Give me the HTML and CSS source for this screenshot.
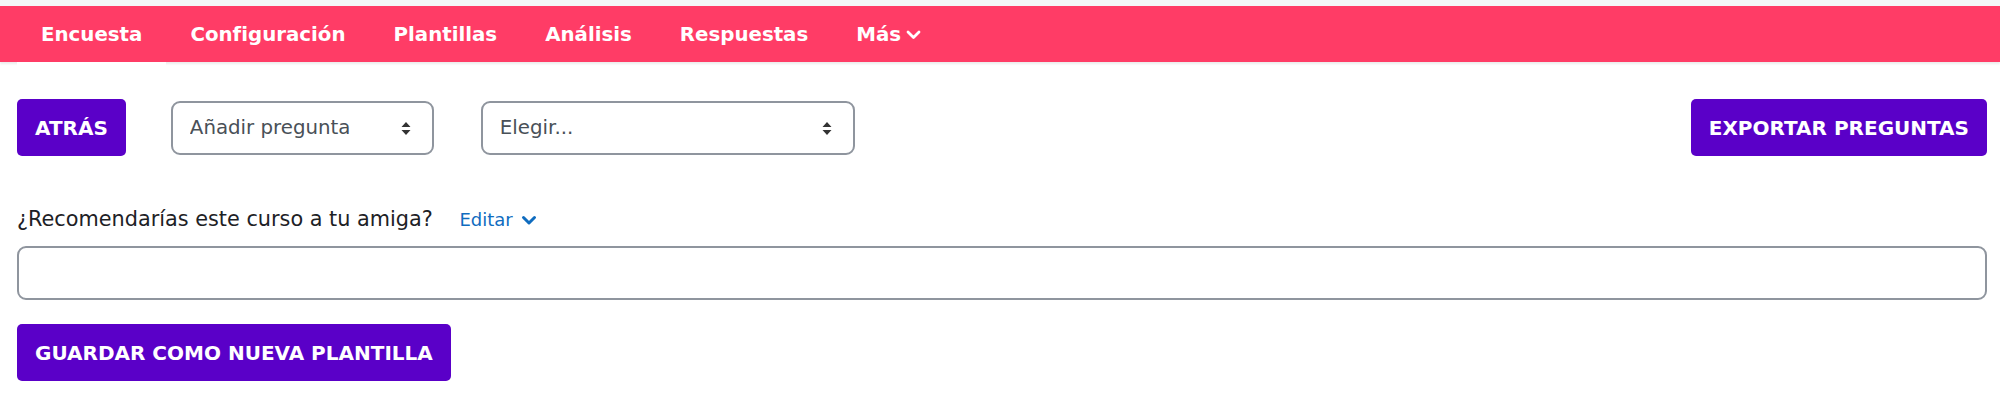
FILE: index.html
```html
<!DOCTYPE html>
<html lang="es">

<head>
    <meta charset="UTF-8">
    <meta name="viewport" content="width=device-width, initial-scale=1.0">
    <title>Encuesta</title>
    <link rel="stylesheet" href="styles.css">
</head>

<body>
    <div class="top">
        <nav class="tabs">
            <a href="#" class="active">Encuesta</a>
            <a href="#">Configuración</a>
            <a href="#">Plantillas</a>
            <a href="#">Análisis</a>
            <a href="#">Respuestas</a>
            <a href="#">Más
                <svg class="chev" width="15" height="10" viewBox="0 0 15 10">
                    <path d="M2 2 L7.5 7.5 L13 2" fill="none" stroke="#fff" stroke-width="2.8" stroke-linecap="round" stroke-linejoin="round" />
                </svg>
            </a>
        </nav>
    </div>

    <div class="content">
        <div class="toolbar">
            <button class="btn">Atrás</button>
            <div class="select-wrap sel-add">
                <select>
                    <option>Añadir pregunta</option>
                </select>
                <svg class="updown" width="10" height="15" viewBox="0 0 10 15">
                    <path d="M5 1 L9.5 6 L0.5 6 Z M5 14 L9.5 9 L0.5 9 Z" fill="#333" />
                </svg>
            </div>
            <div class="select-wrap sel-choose">
                <select>
                    <option>Elegir...</option>
                </select>
                <svg class="updown" width="10" height="15" viewBox="0 0 10 15">
                    <path d="M5 1 L9.5 6 L0.5 6 Z M5 14 L9.5 9 L0.5 9 Z" fill="#333" />
                </svg>
            </div>
            <button class="btn push-right">Exportar preguntas</button>
        </div>

        <div class="question">
            ¿Recomendarías este curso a tu amiga?
            <a href="#" class="edit">Editar
                <svg width="16" height="11" viewBox="0 0 16 11">
                    <path d="M2.5 2.5 L8 8 L13.5 2.5" fill="none" stroke="#0f6cbf" stroke-width="3" stroke-linecap="round" stroke-linejoin="round" />
                </svg>
            </a>
        </div>
        <input type="text" class="answer">

        <button class="btn save">Guardar como nueva plantilla</button>
    </div>
</body>

</html>
```

FILE: styles.css
```css
body {
    font-family: "DejaVu Sans", "Noto Sans", sans-serif;
    background-color: #fff;
    color: #1d2125;
    margin: 0;
    padding: 0;
}

.top {
    background-color: #f4f6f8;
    padding-top: 6px;
}

.tabs {
    background-color: #ff3c66;
    display: flex;
    height: 56px;
    padding-left: 17px;
    box-shadow: 0 2px 2px rgba(0, 0, 0, 0.08);
}

.tabs a {
    position: relative;
    display: flex;
    align-items: center;
    gap: 5px;
    padding: 0 24px;
    color: #fff;
    font-size: 19.8px;
    font-weight: 700;
    text-decoration: none;
}

.tabs a.active::after {
    content: "";
    position: absolute;
    left: 0;
    right: 0;
    bottom: -4px;
    height: 4px;
    background-color: #fff;
}

.chev {
    margin-top: 2px;
}

.content {
    padding: 0 13px 0 17px;
}

.toolbar {
    display: flex;
    align-items: center;
    margin-top: 37px;
}

.btn {
    font-family: inherit;
    background-color: #5a00c8;
    color: #fff;
    border: none;
    border-radius: 5px;
    height: 57px;
    padding: 0 18px;
    font-size: 20px;
    font-weight: 700;
    text-transform: uppercase;
    cursor: pointer;
}

.push-right {
    margin-left: auto;
}

.select-wrap {
    position: relative;
}

.sel-add {
    width: 263px;
    margin-left: 45px;
}

.sel-choose {
    width: 374px;
    margin-left: 47px;
}

.select-wrap select {
    appearance: none;
    width: 100%;
    height: 54px;
    padding: 0 40px 0 17px;
    font-family: inherit;
    font-size: 19.8px;
    color: #495057;
    background-color: #fff;
    border: 2px solid #8f959e;
    border-radius: 9px;
    box-sizing: border-box;
}

.updown {
    position: absolute;
    right: 23px;
    top: 20px;
    pointer-events: none;
}

.question {
    margin-top: 50px;
    font-size: 20.8px;
    line-height: 27px;
}

.edit {
    color: #0f6cbf;
    font-size: 18px;
    text-decoration: none;
    margin-left: 20px;
}

.edit svg {
    margin-left: 3px;
}

.answer {
    display: block;
    width: 100%;
    height: 54px;
    margin-top: 13px;
    border: 2px solid #8f959e;
    border-radius: 9px;
    box-sizing: border-box;
    font-family: inherit;
    font-size: 18px;
}

.save {
    margin-top: 24px;
}
```
